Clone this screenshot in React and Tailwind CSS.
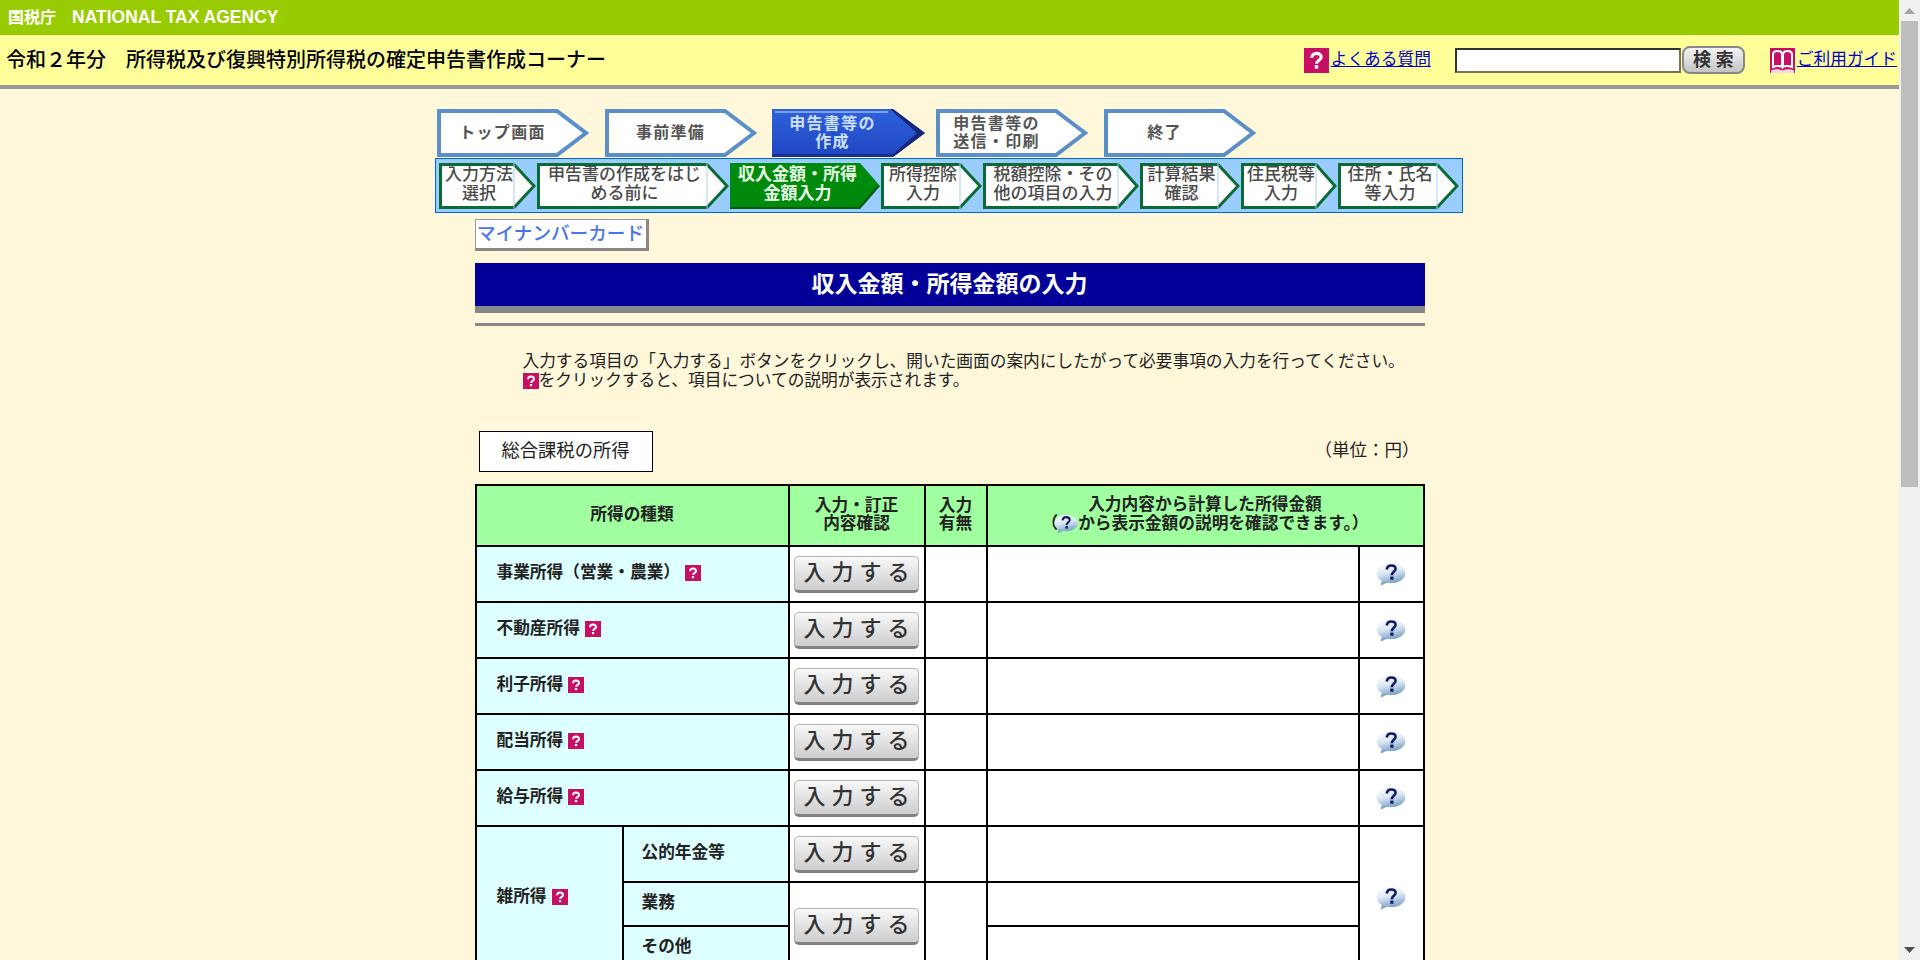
const topSteps = [
  { lines: ["トップ画面"], w: 152, ml: 0, tw: 132 },
  { lines: ["事前準備"], w: 152, ml: 16, tw: 132 },
  { lines: ["申告書等の", "作成"], w: 153, ml: 15, tw: 122, active: true },
  { lines: ["申告書等の", "送信・印刷"], w: 152, ml: 11, tw: 122 },
  { lines: ["終了"], w: 152, ml: 16, tw: 122 },
];

const subSteps = [
  { lines: ["入力方法", "選択"], w: 97, body: 75 },
  { lines: ["申告書の作成をはじ", "める前に"], w: 192, body: 170 },
  { lines: ["収入金額・所得", "金額入力"], w: 150, body: 130, active: true },
  { lines: ["所得控除", "入力"], w: 101, body: 79 },
  { lines: ["税額控除・その", "他の項目の入力"], w: 156, body: 135 },
  { lines: ["計算結果", "確認"], w: 100, body: 78 },
  { lines: ["住民税等", "入力"], w: 96, body: 75 },
  { lines: ["住所・氏名", "等入力"], w: 121, body: 99 },
];

const incomeRows = [
  "事業所得（営業・農業）",
  "不動産所得",
  "利子所得",
  "配当所得",
  "給与所得",
];

function QuestionIcon({ className }) {
  return (
    <svg viewBox="0 0 16 16" className={className}>
      <rect width="16" height="16" fill="#c80f66" />
      <path d="M5 6.200C5 4.400 6.300 3.400 8 3.400s3 1 3 2.500c0 1.900-3 2-3 4.200" fill="none" stroke="#fff" strokeWidth="2" />
      <rect x="6.900" y="11" width="2.200" height="2.200" fill="#fff" />
    </svg>
  );
}

function BookIcon({ className }) {
  return (
    <svg viewBox="0 0 25 25" className={className}>
      <rect width="25" height="25" fill="#c80f66" />
      <path d="M3 19V6.500C3 4 5 3 7.500 3S12 4 12 6.500V19c-1.500-1.500-6-1.500-9 0z" fill="none" stroke="#fff" strokeWidth="2" />
      <path d="M22 19V6.500C22 4 20 3 17.500 3S13 4 13 6.500V19c1.500-1.500 6-1.500 9 0z" fill="none" stroke="#fff" strokeWidth="2" />
      <path d="M1 22.500c4-2 8-1.500 11.500 0 3.500-1.500 7.500-2 11.500 0V25H1z" fill="#f9d5e5" />
    </svg>
  );
}

function HelpBubble({ className, id }) {
  return (
    <svg viewBox="0 0 28 22" className={className}>
      <defs>
        <linearGradient id={id} x1="0.2" y1="0" x2="0.5" y2="1">
          <stop offset="0" stopColor="#ffffff" />
          <stop offset="0.5" stopColor="#dce8f5" />
          <stop offset="1" stopColor="#7ea3c8" />
        </linearGradient>
      </defs>
      <path d="M6 16l-2 6 8-3.500z" fill="#8aa6c0" />
      <ellipse cx="14" cy="10" rx="13.500" ry="9.500" fill={`url(#${id})`} />
      <path d="M10 6.800C10.300 4.200 12.200 3 14.300 3c2.400 0 4 1.300 4 3.200 0 2.700-3.500 2.900-3.500 5.900" fill="none" stroke="#101c68" strokeWidth="2.400" />
      <rect x="13.300" y="13.400" width="3" height="3" fill="#101c68" />
    </svg>
  );
}

function TopStep({ step }) {
  const { w, lines, active } = step;
  const neck = w - 32;
  return (
    <div className="relative h-[48px] shrink-0" style={{ width: w, marginLeft: step.ml }}>
      <svg className="absolute inset-0 w-full h-full" viewBox={`0 0 ${w} 48`}>
        {active ? (
          <>
            <defs>
              <linearGradient id="active-step" x1="0" y1="0" x2="0" y2="1">
                <stop offset="0" stopColor="#2f62dc" />
                <stop offset="1" stopColor="#1f45c2" />
              </linearGradient>
            </defs>
            <polygon points={`0,0 ${neck},0 ${w},24 ${neck},48 0,48`} fill="url(#active-step)" />
            <polygon points={`${neck},0 ${w},24 ${neck},48 ${neck - 3},48 ${w - 8},24 ${neck - 3},0`} fill="#15277a" />
            <rect x="3" y="2" width={neck - 8} height="2" fill="#7ea2ee" />
            <rect x="0" y="45" width={neck} height="3" fill="#16308f" />
          </>
        ) : (
          <polygon
            points={`2,2 ${neck},2 ${w - 3},24 ${neck},46 2,46`}
            fill="#fff"
            stroke="#5b8fc9"
            strokeWidth="4"
          />
        )}
      </svg>
      <div
        className={`relative h-full flex flex-col items-center justify-center text-base leading-[18px] font-bold tracking-[1.3px] ${active ? "text-[#cfe0ff]" : "text-[#555]"}`}
        style={{ width: step.tw }}
      >
        {lines.map(l => <span key={l}>{l}</span>)}
      </div>
    </div>
  );
}

function SubStep({ step }) {
  const { w, body, lines, active } = step;
  return (
    <div className="relative h-[46px] shrink-0" style={{ width: w }}>
      <svg className="absolute inset-0 w-full h-full" viewBox={`0 0 ${w} 46`}>
        {active ? (
          <>
            <polygon points={`0,0 ${body},0 ${w},23 ${body},46 0,46`} fill="#008a0c" />
            <polygon points={`${w},23 ${body},46 0,46 0,44 ${body - 1},44 ${w - 3},23`} fill="#0a5a14" />
          </>
        ) : (
          <>
            <polygon
              points={`1.500,1.500 ${body},1.500 ${w - 2},23 ${body},44.500 1.500,44.500`}
              fill="#fff"
              stroke="#0b6b35"
              strokeWidth="3"
            />
            <line x1={body} y1="0" x2={body} y2="46" stroke="#a9cff5" strokeWidth="1" />
          </>
        )}
      </svg>
      <div
        className={`relative h-full pb-[3px] ml-[3px] flex flex-col items-center justify-center text-[17px] leading-[19px] whitespace-nowrap ${active ? "font-bold text-[#e8ffe8]" : "font-medium text-[#4a4a4a]"}`}
        style={{ width: body }}
      >
        {lines.map(l => <span key={l}>{l}</span>)}
      </div>
    </div>
  );
}

function EntryButton() {
  return (
    <button className="mx-auto flex items-center justify-center w-[125px] h-[37px] rounded-[5px] border border-[#b5b5b5] border-b-[3px] border-b-[#808080] bg-gradient-to-b from-[#f8f8f8] to-[#cdcdcd] text-[22px] leading-none font-medium tracking-[6px] pl-[6px] text-[#333]">
      入力する
    </button>
  );
}

const cell = "border-2 border-black p-0";

export default function App() {
  return (
    <div className="flex h-screen overflow-hidden font-['Liberation_Sans','Noto_Sans_CJK_JP',sans-serif] text-[#222]">
      <main className="flex-1 min-w-0 bg-[#fff7da] overflow-hidden">
        <div className="h-[35px] bg-[#99cc00] flex items-center pl-2 text-base font-bold text-white whitespace-pre">
          国税庁　<span className="text-[17.5px]">NATIONAL TAX AGENCY</span>
        </div>
        <div className="h-[50px] bg-[#ffff99] flex items-center pl-[6px] pr-[2px]">
          <h1 className="text-[20px] font-medium text-black">令和２年分　所得税及び復興特別所得税の確定申告書作成コーナー</h1>
          <div className="ml-auto flex items-center">
            <QuestionIcon className="w-[25px] h-[25px]" />
            <a href="#" className="ml-[2px] text-[16.7px] text-[#0000cc] underline">よくある質問</a>
            <input className="ml-6 w-[226px] h-[25px] bg-white border-2 border-[#333] border-b-[#77705a] border-r-[#77705a]" />
            <button className="ml-[1px] w-[63px] h-[28px] rounded-lg border-2 border-[#888] bg-gradient-to-b from-[#f4f4f4] to-[#c4c4c4] text-lg leading-none font-bold tracking-[5px] pl-[5px] text-[#333]">
              検索
            </button>
            <BookIcon className="ml-[25px] w-[25px] h-[25px]" />
            <a href="#" className="ml-[2px] text-[16.7px] text-[#0000cc] underline">ご利用ガイド</a>
          </div>
        </div>
        <div className="h-1 bg-[#999]" />

        <div className="mx-auto w-[1030px] pt-5">
          <div className="flex pl-[2px]">
            {topSteps.map(s => <TopStep key={s.lines[0] + s.ml} step={s} />)}
          </div>
          <div className="mt-px w-[1028px] h-[55px] border border-[#0066cc] bg-[#99ccff] flex items-center pl-[3px] gap-px">
            {subSteps.map(s => <SubStep key={s.lines[0]} step={s} />)}
          </div>

          <div className="ml-10 w-[950px]">
            <div className="mt-[6px] w-[174px] h-[32px] flex items-center justify-center bg-white border border-[#999] border-r-[3px] border-b-[3px] border-r-[#888] border-b-[#888] text-[18.6px] leading-none font-medium text-[#4a74ee] whitespace-nowrap">
              マイナンバーカード
            </div>

            <h2 className="mt-3 h-[43px] bg-[#000099] flex items-center justify-center text-[23px] font-bold text-white">
              収入金額・所得金額の入力
            </h2>
            <div className="h-[7px] bg-[#888]" />
            <div className="mt-[10px] h-[3px] bg-[#888]" />

            <div className="mt-[26px] pl-12 text-[16.7px] leading-[19px] whitespace-nowrap">
              <p>入力する項目の「入力する」ボタンをクリックし、開いた画面の案内にしたがって必要事項の入力を行ってください。</p>
              <p className="flex items-center">
                <QuestionIcon className="w-4 h-4" />
                をクリックすると、項目についての説明が表示されます。
              </p>
            </div>

            <div className="mt-[41px] flex items-center justify-between pl-1 pr-[5px]">
              <div className="w-[174px] h-[41px] pb-[2px] flex items-center justify-center border border-black bg-white text-[18.3px]">
                総合課税の所得
              </div>
              <div className="pb-[2px] text-[17.5px]">（単位：円）</div>
            </div>

            <table className="mt-3 w-[948px] table-fixed border-collapse text-[16.7px] leading-[18px] font-bold">
              <colgroup>
                <col className="w-[147px]" />
                <col className="w-[166px]" />
                <col className="w-[136px]" />
                <col className="w-[62px]" />
                <col className="w-[372px]" />
                <col className="w-[65px]" />
              </colgroup>
              <thead>
                <tr className="h-[61px] bg-[#a0ff9f] text-center">
                  <th colSpan={2} className={`${cell} pb-[2px]`}>所得の種類</th>
                  <th className={`${cell} pb-[2px]`}>入力・訂正<br />内容確認</th>
                  <th className={`${cell} pb-[2px]`}>入力<br />有無</th>
                  <th colSpan={2} className={`${cell} pb-[2px]`}>
                    入力内容から計算した所得金額
                    <div className="flex items-center justify-center whitespace-nowrap">
                      （<HelpBubble id="bubble-head" className="w-6 h-5 -ml-1" />から表示金額の説明を確認できます。）
                    </div>
                  </th>
                </tr>
              </thead>
              <tbody>
                {incomeRows.map((name, i) => (
                  <tr key={name} className="h-[56px] bg-white">
                    <td colSpan={2} className={`${cell} bg-[#ddffff] pl-5`}>
                      <span className="flex items-center gap-[5px] pb-[2px]">
                        {name}
                        <QuestionIcon className="w-4 h-4" />
                      </span>
                    </td>
                    <td className={cell}><EntryButton /></td>
                    <td className={cell} />
                    <td className={cell} />
                    <td className={cell}><HelpBubble id={`bubble-${i}`} className="mx-auto w-[30px] h-6" /></td>
                  </tr>
                ))}
                <tr className="h-[56px] bg-white">
                  <td rowSpan={3} className={`${cell} bg-[#ddffff] pl-5`}>
                    <span className="flex items-center gap-[5px] pb-[2px]">
                      雑所得
                      <QuestionIcon className="w-4 h-4" />
                    </span>
                  </td>
                  <td className={`${cell} bg-[#ddffff] pl-[18px] pb-[2px]`}>公的年金等</td>
                  <td className={cell}><EntryButton /></td>
                  <td className={cell} />
                  <td className={cell} />
                  <td rowSpan={3} className={cell}><HelpBubble id="bubble-misc" className="mx-auto w-[30px] h-6" /></td>
                </tr>
                <tr className="h-[44px] bg-white">
                  <td className={`${cell} bg-[#ddffff] pl-[18px] pb-[2px]`}>業務</td>
                  <td rowSpan={2} className={cell}><EntryButton /></td>
                  <td rowSpan={2} className={cell} />
                  <td className={cell} />
                </tr>
                <tr className="h-[44px] bg-white">
                  <td className={`${cell} bg-[#ddffff] pl-[18px] pb-[2px]`}>その他</td>
                  <td className={cell} />
                </tr>
              </tbody>
            </table>
          </div>
        </div>
      </main>

      <aside className="w-[21px] shrink-0 bg-[#f1f1f1] flex flex-col items-center">
        <svg viewBox="0 0 21 21" className="w-[21px] h-[21px] shrink-0">
          <path d="M5 14l5.500-6 5.500 6z" fill="#a3a3a3" />
        </svg>
        <div className="w-[17px] h-[466px] bg-[#bdbdbd]" />
        <svg viewBox="0 0 21 21" className="mt-auto w-[21px] h-[21px] shrink-0">
          <path d="M5 8l5.500 6 5.500-6z" fill="#505050" />
        </svg>
      </aside>
    </div>
  );
}
